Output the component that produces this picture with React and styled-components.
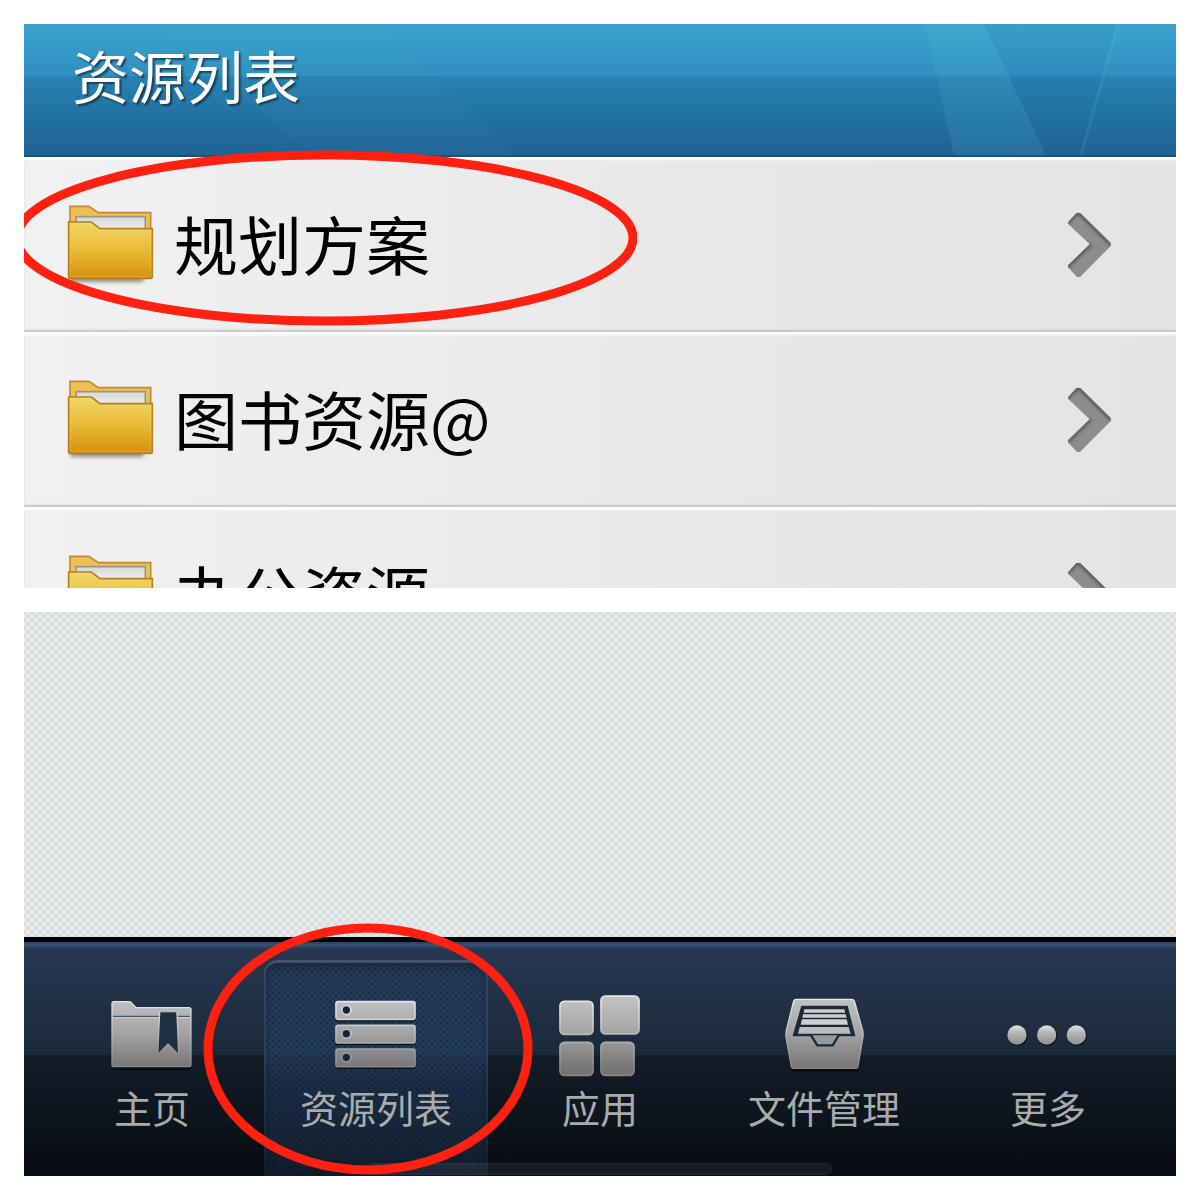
import styled, { createGlobalStyle, css } from "styled-components";

const rows = ["规划方案", "图书资源@", "办公资源"];

const tabs = [
    { label: "主页", icon: HomeIcon },
    { label: "资源列表", icon: ListIcon, active: true },
    { label: "应用", icon: AppsIcon },
    { label: "文件管理", icon: FilesIcon },
    { label: "更多", icon: MoreIcon },
];

function App() {
    return (
        <>
            <GlobalStyle />
            <Page>
                <Panel>
                    <Header>
                        <Title>资源列表</Title>
                        <Rays viewBox="0 0 1152 133" preserveAspectRatio="none" aria-hidden="true">
                            <polygon points="901,0 960,0 1022,133 930,133" fill="#5fd0e8" opacity="0.12" />
                            <polygon points="960,0 1093,0 1056,133 1022,133" fill="#0b4a86" opacity="0.05" />
                            <path d="M1094 0L1057 133" stroke="#7fd4f0" strokeWidth="3" opacity="0.11" />
                            <polygon points="130,0 355,0 490,133 290,133" fill="#5fd0e8" opacity="0.04" />
                        </Rays>
                    </Header>
                    <List>
                        {rows.map((name, i) => (
                            <Row key={name}>
                                <RowLink href="#">
                                    <FolderIcon />
                                    <span>{name}</span>
                                    <ChevronIcon />
                                </RowLink>
                                {i === 0 && (
                                    <RowMark width="624" height="176" viewBox="0 0 624 176" aria-hidden="true">
                                        <ellipse cx="312" cy="88" rx="308" ry="83" />
                                    </RowMark>
                                )}
                            </Row>
                        ))}
                    </List>
                </Panel>
                <Panel>
                    <Wallpaper />
                    <TabBar>
                        {tabs.map(({ label, icon: Icon, active }) => (
                            <Tab key={label} href="#" $active={active} aria-current={active ? "page" : undefined}>
                                <Icon />
                                <span>{label}</span>
                                {active && (
                                    <TabMark width="330" height="252" viewBox="0 0 330 252" aria-hidden="true">
                                        <ellipse cx="165" cy="126" rx="160" ry="121" />
                                    </TabMark>
                                )}
                            </Tab>
                        ))}
                        <HomeIndicator />
                    </TabBar>
                </Panel>
            </Page>
        </>
    );
}

export default App;

function FolderIcon() {
    return (
        <svg width="88" height="82" viewBox="51 57 264 246" aria-hidden="true">
            <defs>
                <linearGradient id="folderFront" x1="0" y1="0" x2="0" y2="1">
                    <stop offset="0" stopColor="#f2d768" />
                    <stop offset="0.5" stopColor="#e8bb35" />
                    <stop offset="1" stopColor="#d6900f" />
                </linearGradient>
                <linearGradient id="folderPaper" x1="0" y1="0" x2="0" y2="1">
                    <stop offset="0" stopColor="#d4d6d8" />
                    <stop offset="1" stopColor="#fbfbfb" />
                </linearGradient>
                <filter id="folderShadow" x="-20%" y="-50%" width="140%" height="250%">
                    <feGaussianBlur stdDeviation="6" />
                </filter>
            </defs>
            <rect x="62" y="270" width="218" height="20" fill="#000" opacity="0.45" filter="url(#folderShadow)" />
            <path d="M60 64H117L145 83H302V270H60Z" fill="#efc055" stroke="#c08a2e" strokeWidth="5" />
            <rect x="78" y="95" width="208" height="60" fill="url(#folderPaper)" stroke="#9b9588" strokeWidth="5" />
            <path
                d="M56 111H124L150 131H307V276Q307 280 303 280H60Q56 280 56 276Z"
                fill="url(#folderFront)"
                stroke="#b47f22"
                strokeWidth="5"
            />
            <path d="M61 275V116H122L148 136H302V275Z" fill="none" stroke="#fbe48a" strokeWidth="3" opacity="0.25" />
        </svg>
    );
}

function ChevronIcon() {
    return (
        <svg width="43" height="65" viewBox="84 66 129 195" aria-hidden="true">
            <defs>
                <clipPath id="chevron">
                    <path d="M84 97L110 68H120L213 160V167L120 261H111L84 232V226L149 163L84 101Z" />
                </clipPath>
                <filter id="chevronSoft" x="-20%" y="-20%" width="140%" height="140%">
                    <feGaussianBlur stdDeviation="4" />
                </filter>
            </defs>
            <g clipPath="url(#chevron)">
                <rect x="84" y="66" width="129" height="195" fill="#8d8d8d" />
                <path
                    d="M80 100L115 66L213 163M80 232L152 163"
                    fill="none"
                    stroke="#5c5c5c"
                    strokeWidth="12"
                    filter="url(#chevronSoft)"
                />
            </g>
        </svg>
    );
}

function TabIcon({ id, children }) {
    return (
        <svg width="84" height="84" viewBox="0 0 252 252" aria-hidden="true">
            <defs>
                <linearGradient id={id} gradientUnits="userSpaceOnUse" x1="0" y1="10" x2="0" y2="228">
                    <stop offset="0" stopColor="#c4c4c4" />
                    <stop offset="0.5" stopColor="#a4a4a4" />
                    <stop offset="1" stopColor="#747474" />
                </linearGradient>
                <linearGradient id={id + "Edge"} gradientUnits="userSpaceOnUse" x1="0" y1="10" x2="0" y2="228">
                    <stop offset="0" stopColor="#ececec" />
                    <stop offset="0.5" stopColor="#bdbdbd" />
                    <stop offset="1" stopColor="#858585" />
                </linearGradient>
            </defs>
            {children}
        </svg>
    );
}

function HomeIcon() {
    return (
        <TabIcon id="home">
            <path d="M5 34V226Q5 231 12 231H238Q245 231 245 224V60Z" fill="#05080c" opacity="0.7" />
            <path
                d="M6 32Q6 26 12 26H56Q61 26 64 29L78 44H237Q243 44 243 50V215Q243 221 237 221H12Q6 221 6 215Z"
                fill="url(#home)"
                stroke="url(#homeEdge)"
                strokeWidth="4"
            />
            <path d="M10 74H239" stroke="#d0d0d0" strokeWidth="3" />
            <path d="M9 70H240" stroke="#34404e" strokeWidth="3" />
            <path d="M147 57H203L207 184L174 156L142 184Z" fill="url(#homeEdge)" />
            <path d="M151 58H199L204 180L174 151L145 180Z" fill="#1d2f45" />
        </TabIcon>
    );
}

function ListIcon() {
    return (
        <TabIcon id="list">
            {[24, 95, 166].map((y) => (
                <g key={y}>
                    <rect x="4" y={y + 5} width="241" height="57" rx="8" fill="#05080c" opacity="0.75" />
                    <rect
                        x="6"
                        y={y + 2}
                        width="237"
                        height="53"
                        rx="6"
                        fill="url(#list)"
                        stroke="url(#listEdge)"
                        strokeWidth="5"
                    />
                    <circle cx="38" cy={y + 28} r="16" fill="url(#listEdge)" />
                    <circle cx="37" cy={y + 27} r="11" fill="#17243a" />
                </g>
            ))}
        </TabIcon>
    );
}

function AppsIcon() {
    const squares = [
        [6, 25, 99],
        [129, 9, 114],
        [6, 148, 99],
        [129, 148, 99],
    ];
    return (
        <TabIcon id="apps">
            {squares.map(([x, y, size]) => (
                <rect
                    key={x + "-" + y}
                    x={x}
                    y={y}
                    width={size}
                    height={size}
                    rx="13"
                    fill="url(#apps)"
                    stroke="url(#appsEdge)"
                    strokeWidth="5"
                />
            ))}
        </TabIcon>
    );
}

function FilesIcon() {
    return (
        <TabIcon id="files">
            <path d="M10 130L28 236H229L245 140Z" fill="#05080c" opacity="0.6" />
            <path
                d="M42 19H210Q215 19 217 24L242 112Q244 120 243 132L228 221Q227 226 222 226H34Q29 226 28 221L12 132Q11 120 13 112L35 24Q37 19 42 19Z"
                fill="url(#files)"
                stroke="url(#filesEdge)"
                strokeWidth="4"
            />
            <path d="M57 37H198L222 131H30Z" fill="#1b2939" stroke="url(#filesEdge)" strokeWidth="2" />
            <path d="M67 49H187L190 59H65ZM63 64H191L194 74H61ZM60 79H194L198 95H56Z" fill="#cfcfcf" />
            <path d="M53 102H200L206 122H48Z" fill="#bcbcbc" />
            <path d="M87 127L106 157H152L170 127" fill="#989898" stroke="#1b2939" strokeWidth="7" />
        </TabIcon>
    );
}

function MoreIcon() {
    return (
        <TabIcon id="more">
            <defs>
                <linearGradient id="dot" x1="0" y1="0" x2="0" y2="1">
                    <stop offset="0" stopColor="#e2e2e2" />
                    <stop offset="0.4" stopColor="#b4b4b4" />
                    <stop offset="1" stopColor="#909090" />
                </linearGradient>
            </defs>
            {[33, 122, 211].map((x) => (
                <g key={x}>
                    <circle cx={x + 3} cy="130" r="29" fill="#05080c" opacity="0.7" />
                    <circle cx={x} cy="126" r="29" fill="url(#dot)" />
                </g>
            ))}
        </TabIcon>
    );
}

const GlobalStyle = createGlobalStyle`
    * {
        box-sizing: border-box;
    }

    body {
        margin: 0;
        background: #ffffff;
        font-family: "Noto Sans CJK SC", sans-serif;
    }

    svg {
        flex-shrink: 0;
    }
`;

const Page = styled.main`
    display: grid;
    grid-template-rows: minmax(0, 1fr) minmax(0, 1fr);
    gap: 24px;
    height: 100vh;
    padding: 24px;
`;

const Panel = styled.section`
    position: relative;
    display: flex;
    flex-direction: column;
    overflow: hidden;
`;

const Header = styled.header`
    position: relative;
    flex-shrink: 0;
    height: 133px;
    padding: 18px 48px;
    border-bottom: 2px solid #1d4f78;
    background: linear-gradient(#3ba3cf 0, #2f8fbf 52px, #2781b2 53px, #1f6393 100%);
`;

const Title = styled.h1`
    margin: 0;
    color: #ffffff;
    font-size: 57px;
    font-weight: 400;
    line-height: 64px;
    text-shadow: 2px 2px 2px rgba(0, 0, 0, 0.5);
`;

const Rays = styled.svg`
    position: absolute;
    inset: 0;
    width: 100%;
    height: 100%;
    pointer-events: none;
`;

const List = styled.ul`
    margin: 0;
    padding: 0;
    list-style: none;
`;

const Row = styled.li`
    position: relative;
`;

const RowLink = styled.a`
    display: flex;
    align-items: center;
    gap: 19px;
    height: 175px;
    padding: 0 65px 0 43px;
    background: linear-gradient(90deg, #f1f1f1, #e8e8e8 60%, #e4e4e4);
    box-shadow: inset 0 3px 2px #ffffff, inset 0 -2px 2px #c4c4c4;
    color: #000000;
    font-size: 64px;
    line-height: 80px;
    text-decoration: none;

    span {
        flex: 1;
        padding-bottom: 6px;
    }
`;

const mark = css`
    position: absolute;
    z-index: 1;
    fill: none;
    stroke: #ff2010;
    stroke-width: 9px;
    pointer-events: none;
`;

const RowMark = styled.svg`
    ${mark}
    left: -11px;
    top: -7px;
`;

const Wallpaper = styled.div`
    flex: 1;
    background-color: #e9ebeb;
    background-image: radial-gradient(circle, #cfd4d4 0, transparent 3px),
        radial-gradient(circle, #cfd4d4 0, transparent 3px);
    background-position: 0 0, 4px 4px;
    background-size: 8px 8px;
`;

const TabBar = styled.nav`
    position: relative;
    display: grid;
    grid-template-columns: repeat(5, 1fr);
    height: 239px;
    padding: 18px 16px 0;
    border-top: 5px solid #000000;
    background: linear-gradient(
        #2c4361 0,
        #365272 3px,
        #26374f 7px,
        #24344c 30px,
        #1b2a3a 112px,
        #131d27 114px,
        #0c141d 180px,
        #080b12 100%
    );
`;

const Tab = styled.a`
    position: relative;
    display: flex;
    flex-direction: column;
    align-items: center;
    gap: 2px;
    padding-top: 33px;
    color: #a9abad;
    font-size: 38px;
    line-height: 56px;
    text-decoration: none;
    white-space: nowrap;

    ${({ $active }) =>
        $active &&
        css`
            border-radius: 14px 14px 0 0;
            background: linear-gradient(#44566b, rgba(68, 86, 107, 0)) 0 0 / 2px 100% no-repeat,
                linear-gradient(#44566b, rgba(68, 86, 107, 0)) 100% 0 / 2px 100% no-repeat,
                radial-gradient(circle, rgba(8, 20, 36, 0.35) 1px, transparent 2px) 0 0 / 6px 6px,
                radial-gradient(circle, rgba(8, 20, 36, 0.35) 1px, transparent 2px) 3px 3px / 6px 6px,
                linear-gradient(#243c5a 0, #243d5e 90px, #1c2f49 120px, #172638 180px, #121c29 100%);
            box-shadow: inset 0 3px 1px #44566b, inset 0 6px 8px rgba(5, 15, 30, 0.4);
        `}
`;

const TabMark = styled.svg`
    ${mark}
    left: -61px;
    top: -37px;
`;

const HomeIndicator = styled.div`
    position: absolute;
    left: 50%;
    bottom: 1px;
    width: 464px;
    height: 12px;
    border: 2px solid rgba(255, 255, 255, 0.03);
    border-radius: 6px;
    background: rgba(255, 255, 255, 0.06);
    transform: translateX(-50%);
`;
